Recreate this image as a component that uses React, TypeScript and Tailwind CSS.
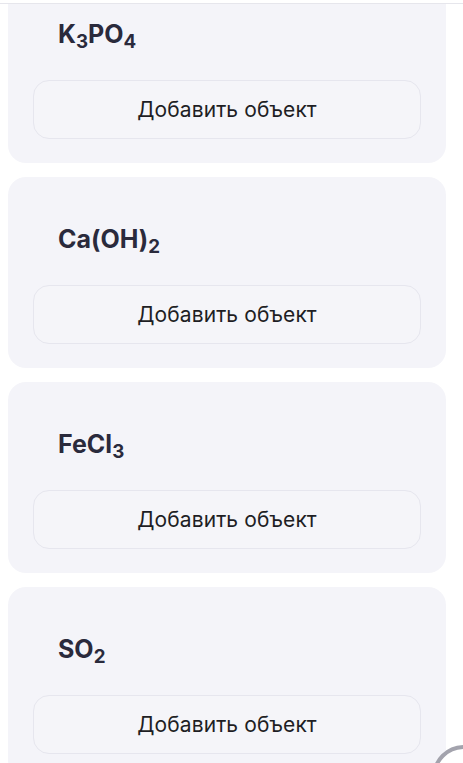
import type { ReactNode } from "react";

type Item = { id: string; formula: ReactNode };

const items: Item[] = [
  {
    id: "k3po4",
    formula: (
      <>
        K<sub>3</sub>PO<sub>4</sub>
      </>
    ),
  },
  {
    id: "caoh2",
    formula: (
      <>
        Ca(OH)<sub>2</sub>
      </>
    ),
  },
  {
    id: "fecl3",
    formula: (
      <>
        FeCl<sub>3</sub>
      </>
    ),
  },
  {
    id: "so2",
    formula: (
      <>
        SO<sub>2</sub>
      </>
    ),
  },
];

function ObjectCard({ formula }: { formula: ReactNode }) {
  return (
    <div className="h-[191px] shrink-0 rounded-[18px] bg-[#f4f4f9] px-[25px] pt-[24px]">
      <div className="h-[84px] pl-[25px] pt-[23px] text-[25px] font-bold leading-[30px] text-[#2a2a3c]">
        {formula}
      </div>
      <button
        type="button"
        className="flex h-[59px] w-full items-center justify-center rounded-[16px] border border-[#e6e6ee] bg-[#f5f5f9] text-[21px] tracking-[0.1px] text-[#1e1e24]"
      >
        Добавить объект
      </button>
    </div>
  );
}

export default function App() {
  return (
    <div
      className="relative h-[763px] w-[463px] overflow-hidden bg-white"
      style={{ fontFamily: "Inter, 'Noto Sans', sans-serif" }}
    >
      {/* header edge */}
      <div className="absolute inset-x-0 top-0 z-10 h-[4px] border-b border-[#e6e6ec] bg-white" />

      <div className="-mt-[28px] flex flex-col gap-[14px] pl-[8px] pr-[17px]">
        {items.map((it) => (
          <ObjectCard key={it.id} formula={it.formula} />
        ))}
      </div>

      {/* floating round button, mostly off-screen */}
      <div className="absolute left-[432px] top-[745px] h-[64px] w-[64px] rounded-full border-[4px] border-[#a3a3ad] bg-white" />
    </div>
  );
}
